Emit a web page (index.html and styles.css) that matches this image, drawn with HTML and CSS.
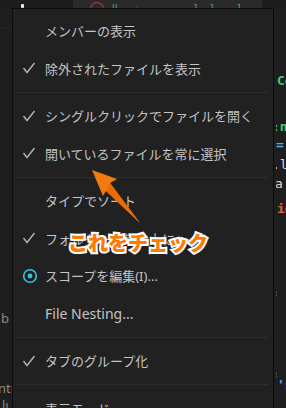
FILE: index.html
```html
<!DOCTYPE html>
<html lang="ja">
<head>
<meta charset="utf-8">
<link rel="stylesheet" href="styles.css">
</head>
<body>
<div class="ide">
  <div class="topbar">
    <div class="tb-left"><span class="dot"></span></div>
    <div class="tb-tab"><span class="tab-icon"></span><span class="tab-text">u&nbsp;&nbsp;&nbsp;.&nbsp;&nbsp;&nbsp;&nbsp;&nbsp;&nbsp;&nbsp;&nbsp;&nbsp;&nbsp;ı&nbsp;&nbsp;ı&nbsp;&nbsp;&nbsp;&nbsp;ı</span></div>
    <div class="tb-right"></div>
  </div>
  <div class="main">
    <div class="project">
      <div class="proj-line l1">b</div>
      <div class="proj-line l2">ntr</div>
      <div class="proj-line l3">lı</div>
    </div>
    <div class="gap"></div>
    <div class="editor">
      <div class="code c1"><span class="g">Co</span></div>
      <div class="code c2"><span class="g">:np</span></div>
      <div class="code c3"><span class="b">=</span></div>
      <div class="code c4"><span class="w">.le</span></div>
      <div class="code c5"><span class="w">a</span></div>
      <div class="code c6"><span class="r">id</span></div>
      <div class="code c7"><span class="b">:</span></div>
      <div class="code c8"><span class="b">:</span></div>
      <div class="code c9"><span class="b">'s</span></div>
    </div>
  </div>
</div>

<div class="menu">
  <div class="item"><span class="ico"></span><span class="label">メンバーの表示</span></div>
  <div class="item"><span class="ico"><svg width="14" height="12" viewBox="0 0 14 12"><polyline points="1.5,6 5,10.5 12.5,1" fill="none" stroke="#b4b4b4" stroke-width="1.4"/></svg></span><span class="label">除外されたファイルを表示</span></div>
  <div class="sep"></div>
  <div class="item"><span class="ico"><svg width="14" height="12" viewBox="0 0 14 12"><polyline points="1.5,6 5,10.5 12.5,1" fill="none" stroke="#b4b4b4" stroke-width="1.4"/></svg></span><span class="label">シングルクリックでファイルを開く</span></div>
  <div class="item"><span class="ico"><svg width="14" height="12" viewBox="0 0 14 12"><polyline points="1.5,6 5,10.5 12.5,1" fill="none" stroke="#b4b4b4" stroke-width="1.4"/></svg></span><span class="label">開いているファイルを常に選択</span></div>
  <div class="sep"></div>
  <div class="item"><span class="ico"></span><span class="label">タイプでソート</span></div>
  <div class="item"><span class="ico"><svg width="14" height="12" viewBox="0 0 14 12"><polyline points="1.5,6 5,10.5 12.5,1" fill="none" stroke="#b4b4b4" stroke-width="1.4"/></svg></span><span class="label">フォルダーを常に上に</span></div>
  <div class="item"><span class="ico"><svg width="16" height="16" viewBox="0 0 16 16"><circle cx="8" cy="8" r="6.3" fill="none" stroke="#36c6dc" stroke-width="1.6"/><circle cx="8" cy="8" r="2.4" fill="#36c6dc"/></svg></span><span class="label">スコープを編集(I)...</span></div>
  <div class="item"><span class="ico"></span><span class="label latin">File Nesting...</span></div>
  <div class="sep"></div>
  <div class="item"><span class="ico"><svg width="14" height="12" viewBox="0 0 14 12"><polyline points="1.5,6 5,10.5 12.5,1" fill="none" stroke="#b4b4b4" stroke-width="1.4"/></svg></span><span class="label">タブのグループ化</span></div>
  <div class="sep"></div>
  <div class="item"><span class="ico"></span><span class="label">表示モード</span></div>
</div>

<svg class="arrow" width="60" height="62" viewBox="0 0 60 62">
  <polygon points="2,1 27,10 20,14 50,54 16,22 13,27" fill="#f47a10"/>
  <polygon points="20,14 50,54 16,22" fill="#e86c05"/>
</svg>
<div class="callout">これをチェック</div>
</body>
</html>
```
FILE: styles.css
```css
html, body {
  margin: 0;
  padding: 0;
}
body {
  width: 286px;
  height: 408px;
  overflow: hidden;
  background: #1e1e1e;
  position: relative;
  font-family: "Noto Sans", "Noto Sans CJK JP", sans-serif;
}
.ide {
  display: flex;
  flex-direction: column;
  height: 408px;
  overflow: hidden;
}
.topbar {
  display: flex;
  height: 9px;
  flex: none;
}
.tb-left {
  width: 73px;
  background: #1d1d1d;
}
.dot {
  display: block;
  width: 3px;
  height: 4px;
  background: #e8e8e8;
  border-radius: 1px;
  margin: 4px 0 0 21px;
}
.tb-tab {
  width: 189px;
  background: #2a2a2a;
  display: flex;
  align-items: flex-end;
  overflow: hidden;
}
.tab-icon {
  display: block;
  width: 12px;
  height: 6px;
  border: 1.5px solid #c0393b;
  border-bottom: none;
  border-radius: 7px 7px 0 0;
  margin-left: 17px;
}
.tab-text {
  color: #5bb56a;
  font-size: 9px;
  line-height: 6px;
  margin-left: 8px;
  white-space: nowrap;
  font-family: "DejaVu Sans Mono", monospace;
}
.tb-right {
  flex: 1;
  background: #1d1d1d;
}
.main {
  flex: 1;
  display: flex;
  overflow: hidden;
}
.project {
  width: 12px;
  background: #1e1e1e;
  border-top: 1px solid #262626;
  margin-top: 19px;
  overflow: hidden;
  color: #8c8c8c;
  font-size: 13px;
  font-family: "Noto Sans", sans-serif;
}
.proj-line {
  line-height: 16px;
  white-space: nowrap;
}
.l1 { margin-top: 281px; padding-left: 1px; }
.l2 { margin-top: 54px; margin-left: -2px; }
.l3 { margin-top: 1px; margin-left: 2px; }
.gap {
  width: 264px;
}
.editor {
  flex: 1;
  background: #1e1e1e;
  overflow: hidden;
  font-family: "DejaVu Sans Mono", monospace;
  font-size: 13px;
  font-weight: bold;
  white-space: nowrap;
}
.code { line-height: 16px; }
.c1 { margin-top: 64px; padding-left: 1px; }
.c2 { margin-top: 30px; margin-left: -4px; }
.c3 { margin-top: 2px; }
.c4 { margin-top: 4px; margin-left: -4px; font-weight: normal; }
.c5 { margin-top: 3px; margin-left: -1px; font-weight: normal; }
.c6 { margin-top: 9px; padding-left: 1px; }
.c7 { margin-top: 68px; margin-left: -3px; font-size: 9px; }
.c8 { margin-top: 65px; margin-left: -3px; font-size: 9px; }
.c9 { margin-top: -5px; margin-left: 1px; }
.g { color: #4fc47c; }
.b { color: #4fb0e0; }
.w { color: #d8d8d8; }
.r { color: #e0663f; }

.menu {
  position: absolute;
  left: 12px;
  top: 8px;
  width: 262px;
  height: 400px;
  overflow: hidden;
  background: #212121;
  border: 1px solid #0c0c0c;
  border-bottom: none;
  padding-top: 3px;
  box-sizing: border-box;
}
.item {
  height: 37.5px;
  display: flex;
  align-items: center;
  color: #c4c4c4;
  font-size: 13px;
  white-space: nowrap;
}
.ico {
  width: 32px;
  flex: none;
  display: flex;
  align-items: center;
  padding-left: 9px;
  box-sizing: border-box;
}
.latin {
  font-size: 14px;
  font-family: "Noto Sans", sans-serif;
}
.sep {
  height: 1px;
  background: #2d2d2d;
  margin: 4.5px 4px 4.5px 3px;
}
.arrow {
  position: absolute;
  left: 90px;
  top: 169px;
}
.callout {
  position: absolute;
  left: 68px;
  top: 228px;
  font-size: 20px;
  font-weight: 900;
  color: #ff7a00;
  font-family: "Noto Sans CJK JP", sans-serif;
  -webkit-text-stroke: 4px #ffffff;
  paint-order: stroke fill;
  line-height: 30px;
  white-space: nowrap;
}
```
